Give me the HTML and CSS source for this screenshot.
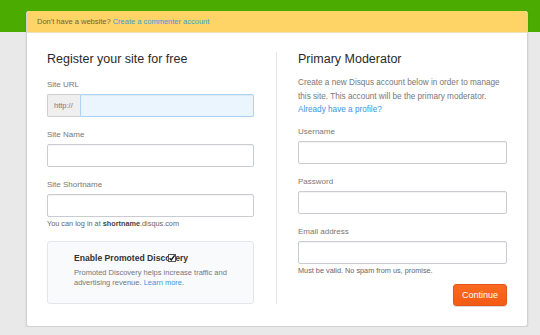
FILE: index.html
```html
<!doctype html>
<html>

<head>
	<meta charset="utf-8">
	<title>Register your site</title>
	<link rel="stylesheet" href="styles.css">
</head>

<body>
	<div class="topbar"></div>
	<div class="card">
		<div class="notice">Don't have a website? <a href="#">Create a commenter account</a></div>
		<div class="columns">
			<div class="col col-left">
				<h2>Register your site for free</h2>
				<div class="field">
					<label>Site URL</label>
					<div class="url-input">
						<span class="prefix">http://</span>
						<input type="text" class="url">
					</div>
				</div>
				<div class="field">
					<label>Site Name</label>
					<input type="text">
				</div>
				<div class="field field-hint">
					<label>Site Shortname</label>
					<input type="text">
					<p class="hint">You can log in at <b>shortname</b>.disqus.com</p>
				</div>
				<div class="promo">
					<h3>Enable Promoted Discovery
						<svg class="check" width="8" height="8" viewBox="0 0 8 8">
							<rect x="0.5" y="0.5" width="7" height="7" fill="#fff" stroke="#555"/>
							<path d="M1.6 4.2 L3.3 6 L6.6 1.4" fill="none" stroke="#111" stroke-width="1.4"/>
						</svg>
					</h3>
					<p>Promoted Discovery helps increase traffic and advertising revenue. <a href="#">Learn more.</a></p>
				</div>
			</div>
			<div class="col col-right">
				<h2>Primary Moderator</h2>
				<p class="intro">Create a new Disqus account below in order to manage this site. This account will be the primary moderator. <a href="#">Already have a profile?</a></p>
				<div class="field">
					<label>Username</label>
					<input type="text">
				</div>
				<div class="field">
					<label>Password</label>
					<input type="password">
				</div>
				<div class="field field-hint">
					<label>Email address</label>
					<input type="text">
					<p class="hint">Must be valid. No spam from us, promise.</p>
				</div>
				<div class="actions">
					<button class="btn">Continue</button>
				</div>
			</div>
		</div>
	</div>
</body>

</html>
```

FILE: styles.css
```css
body {
	margin: 0;
	background-color: #e9e9e9;
	font-family: "Liberation Sans", Arial, sans-serif;
	color: #777777;
}

a {
	color: #3d95e0;
	text-decoration: none;
}

.topbar {
	height: 32px;
	background-color: #4cab00;
}

.card {
	width: 500px;
	margin: -21px 0 0 26px;
	background-color: #ffffff;
	border: 1px solid #d2d2d2;
	border-top: none;
	border-radius: 3px;
	box-shadow: 0 1px 2px rgba(0, 0, 0, 0.12);
}

.notice {
	height: 21px;
	line-height: 21px;
	padding-left: 10px;
	background-color: #fed466;
	border-bottom: 1px solid #f0e2b8;
	border-radius: 3px 3px 0 0;
	font-size: 7.5px;
	color: #6b6240;
}

.columns {
	display: flex;
	align-items: flex-start;
	padding: 19px 20px 20px 20px;
}

.col-left {
	width: 207px;
	padding-right: 22px;
	border-right: 1px solid #e6e6e6;
}

.col-right {
	flex: 1;
	padding-left: 21px;
}

h2 {
	margin: 0 0 12px 0;
	font-size: 12.5px;
	line-height: 15px;
	font-weight: normal;
	color: #2a2a2a;
}

label {
	display: block;
	font-size: 8px;
	line-height: 11px;
	margin-bottom: 4px;
	color: #777777;
}

.field {
	margin-bottom: 12px;
}

.field-hint {
	margin-bottom: 0;
}

input {
	display: block;
	box-sizing: border-box;
	width: 100%;
	height: 23px;
	margin: 0;
	border: 1px solid #c9cdd1;
	border-radius: 2px;
	box-shadow: inset 0 1px 1px rgba(0, 0, 0, 0.05);
	background-color: #ffffff;
}

.url-input {
	display: flex;
	height: 23px;
}

.prefix {
	width: 33px;
	box-sizing: border-box;
	padding-left: 6px;
	line-height: 21px;
	font-size: 7.5px;
	color: #777777;
	background-color: #efefef;
	border: 1px solid #cfcfcf;
	border-right: none;
	border-radius: 2px 0 0 2px;
}

.url-input input.url {
	flex: 1;
	background-color: #eaf5fe;
	border-color: #a9d4f6;
	border-radius: 0 2px 2px 0;
}

.hint {
	margin: 1px 0 0 0;
	font-size: 7.3px;
	line-height: 11px;
	color: #666666;
}

.hint b {
	color: #444444;
}

.promo {
	position: relative;
	margin-top: 12px;
	padding: 11px 14px 15px 26px;
	background-color: #f8fafc;
	border: 1px solid #e2e6ea;
	border-radius: 3px;
}

.promo h3 {
	position: relative;
	margin: 0 0 4px 0;
	font-size: 8.6px;
	line-height: 11px;
	color: #333333;
}

.check {
	position: absolute;
	left: 94px;
	top: 1px;
}

.promo p {
	margin: 0;
	font-size: 7.5px;
	line-height: 10px;
	color: #777777;
}

.intro {
	margin: -3px 0 9px 0;
	font-size: 8.2px;
	line-height: 13.5px;
	color: #777777;
}

.intro a {
	display: block;
}

.actions {
	display: flex;
	justify-content: flex-end;
	margin-top: 8px;
}

.btn {
	width: 54px;
	height: 22px;
	padding: 0;
	font-family: "Liberation Sans", Arial, sans-serif;
	font-size: 9px;
	color: #ffffff;
	background: linear-gradient(#fb6a22, #f45b14);
	border: 1px solid #e3561a;
	border-radius: 3px;
	box-shadow: 0 1px 1px rgba(0, 0, 0, 0.15);
}
```
